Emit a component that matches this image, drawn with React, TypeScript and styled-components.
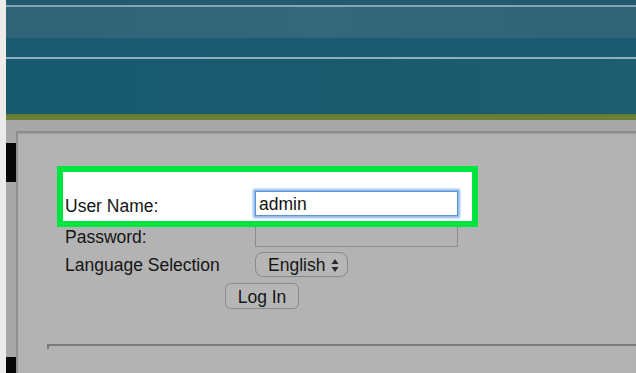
import React from "react";
import styled, { createGlobalStyle } from "styled-components";

const Global = createGlobalStyle`
  html, body { margin: 0; padding: 0; }
  body {
    width: 636px;
    height: 373px;
    overflow: hidden;
    font-family: "Liberation Sans", Arial, Helvetica, sans-serif;
    background: #ecebe9;
  }
`;

const Page = styled.div`
  display: flex;
  width: 636px;
  height: 373px;
  overflow: hidden;
`;

const Sidebar = styled.div`
  width: 6px;
  flex: none;
  background: #ecebe9;
`;

const Main = styled.div`
  flex: 1;
  display: flex;
  flex-direction: column;
  min-width: 0;
`;

const Banner = styled.header`
  height: 114px;
  flex: none;
  display: flex;
  flex-direction: column;
`;

const Band = styled.div<{ $h: number; $bg: string }>`
  height: ${(p) => p.$h}px;
  flex: none;
  background: ${(p) => p.$bg};
`;

const GreenBar = styled.div`
  height: 6px;
  flex: none;
  background: linear-gradient(#5f7a2e, #6d8236 60%, #6a7d3a);
`;

const Content = styled.div`
  flex: 1;
  display: flex;
  background: #a8a8a8;
  min-height: 0;
`;

const Gutter = styled.div`
  width: 10px;
  flex: none;
  display: flex;
  flex-direction: column;
`;

const Spacer = styled.div<{ $h?: number }>`
  height: ${(p) => (p.$h ? `${p.$h}px` : "auto")};
  flex: ${(p) => (p.$h ? "none" : "1")};
`;

const BlackBlock = styled.div<{ $h: number }>`
  height: ${(p) => p.$h}px;
  flex: none;
  background: #060606;
`;

const Panel = styled.section`
  flex: 1;
  margin-top: 11px;
  background: #b3b3b3;
  border-top: 2px solid #8c8c8c;
  border-left: 2px solid #8f8f8f;
  box-shadow: inset 0 1px 1px rgba(0, 0, 0, 0.12);
  display: flex;
  flex-direction: column;
  padding-top: 33px;
  min-height: 0;
`;

const Highlight = styled.div`
  position: relative;
  z-index: 1;
  box-sizing: border-box;
  margin-left: 39px;
  width: 421px;
  height: 61px;
  border: 6px solid #00e640;
  background: #ffffff;
  display: flex;
  align-items: flex-end;
  padding: 0 0 5px 2px;
`;

const Row = styled.div<{ $mt: number }>`
  display: flex;
  align-items: center;
  margin-top: ${(p) => p.$mt}px;
  margin-left: 47px;
`;

const Label = styled.label<{ $dy?: number }>`
  width: 190px;
  flex: none;
  font-size: 17.5px;
  color: #151515;
  line-height: 20px;
  padding-top: ${(p) => p.$dy ?? 0}px;
`;

const TextInput = styled.input<{ $focused?: boolean; $h: number }>`
  box-sizing: border-box;
  width: 203px;
  height: ${(p) => p.$h}px;
  margin: 0;
  padding: 2px 3px 0;
  font-family: "Liberation Sans", Arial, Helvetica, sans-serif;
  font-size: 17.5px;
  color: #111;
  outline: none;
  border: 1px solid ${(p) => (p.$focused ? "#5b97d6" : "#8c8c8c")};
  background: ${(p) => (p.$focused ? "#ffffff" : "#b3b3b3")};
  box-shadow: ${(p) =>
    p.$focused ? "0 0 2px 2px rgba(110, 165, 230, 0.8)" : "none"};
`;

const SelectBox = styled.div`
  box-sizing: border-box;
  width: 93px;
  height: 25px;
  border: 1px solid #8a8a8a;
  border-radius: 8px;
  background: #b6b6b6;
  display: flex;
  align-items: center;
  padding: 1px 0 0 12px;
  gap: 6px;
  font-size: 17.5px;
  color: #151515;
`;

const Button = styled.button`
  box-sizing: border-box;
  margin: 6px 0 0 207px;
  width: 74px;
  height: 26px;
  padding: 2px 0 0;
  border: 1px solid #8c8c8c;
  border-radius: 6px;
  background: #b6b6b6;
  font-family: "Liberation Sans", Arial, Helvetica, sans-serif;
  font-size: 17.5px;
  color: #151515;
  align-self: flex-start;
`;

const Divider = styled.div`
  margin: 35px 0 0 29px;
  height: 5px;
  box-sizing: border-box;
  border-top: 2px solid #7a7a7a;
  border-left: 2px solid #7a7a7a;
`;

const Arrows = () => (
  <svg width="8" height="15" viewBox="0 0 8 15">
    <path d="M4 1 L7.5 6 H0.5 Z" fill="#2a2a2a" />
    <path d="M4 14 L7.5 9 H0.5 Z" fill="#2a2a2a" />
  </svg>
);

export default function App() {
  return (
    <Page>
      <Global />
      <Sidebar />
      <Main>
        <Banner>
          <Band $h={5} $bg="#1f5a6e" />
          <Band $h={2} $bg="#86a4b1" />
          <Band $h={31} $bg="linear-gradient(90deg, #2f6377, #33677a 50%, #2f6477)" />
          <Band $h={19} $bg="#1b5a70" />
          <Band $h={2} $bg="#8eafbb" />
          <Band $h={55} $bg="linear-gradient(90deg, #165a70, #1a5a6e 50%, #1f5d70)" />
        </Banner>
        <GreenBar />
        <Content>
          <Gutter>
            <Spacer $h={23} />
            <BlackBlock $h={39} />
            <Spacer />
            <BlackBlock $h={16} />
          </Gutter>
          <Panel>
            <Highlight>
              <Label htmlFor="user" $dy={2}>User Name:</Label>
              <TextInput id="user" $focused $h={25} defaultValue="admin" />
            </Highlight>
            <Row $mt={-4}>
              <Label htmlFor="pass" $dy={3}>Password:</Label>
              <TextInput id="pass" type="password" $h={24} />
            </Row>
            <Row $mt={5}>
              <Label $dy={1}>Language Selection</Label>
              <SelectBox>
                English
                <Arrows />
              </SelectBox>
            </Row>
            <Button>Log In</Button>
            <Divider />
          </Panel>
        </Content>
      </Main>
    </Page>
  );
}
